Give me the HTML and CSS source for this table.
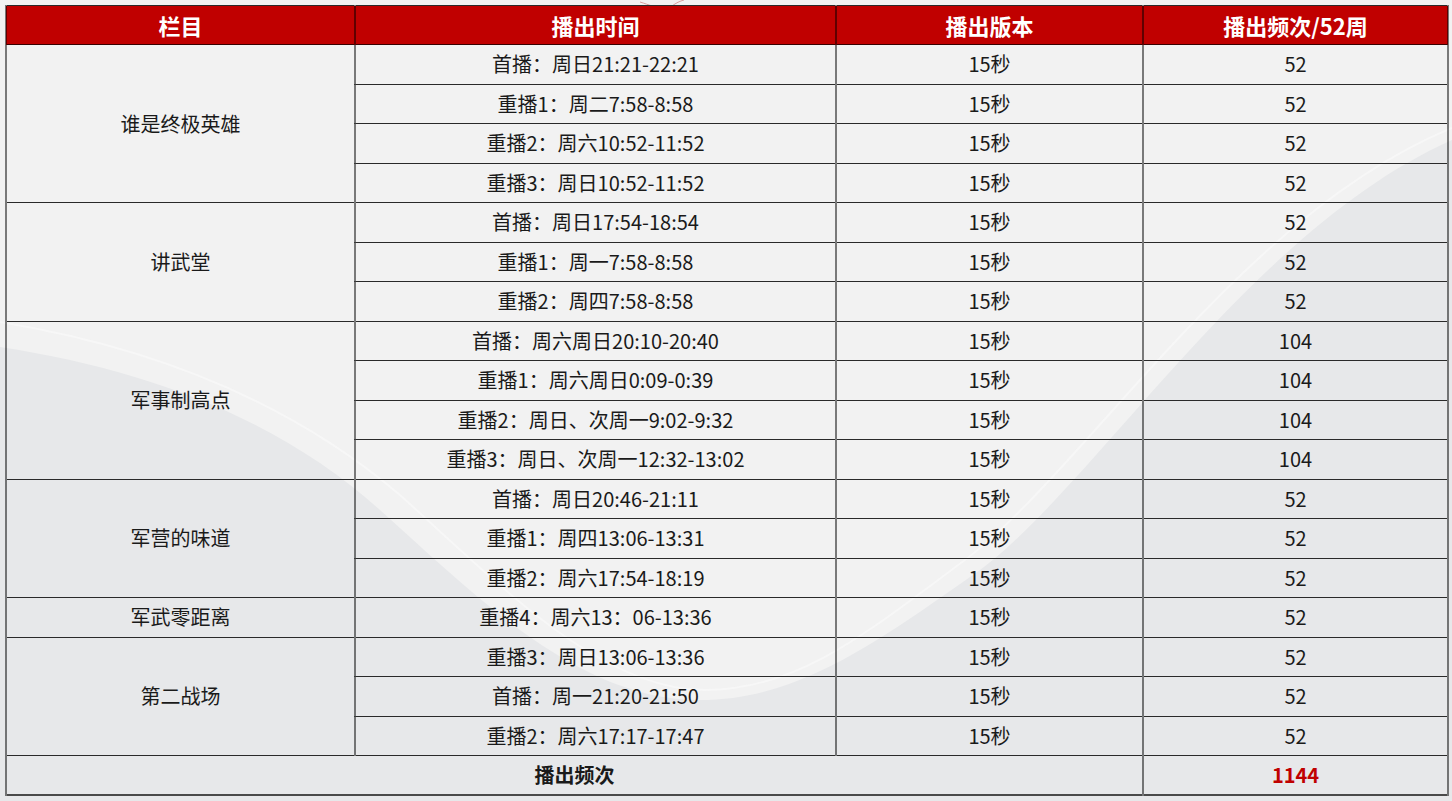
FILE: index.html
```html
<!DOCTYPE html>
<html lang="zh-CN">
<head>
<meta charset="utf-8">
<title>播出时间表</title>
<link rel="stylesheet" href="styles.css">
</head>
<body>
<svg class="bg" width="1452" height="801" viewBox="0 0 1452 801" aria-hidden="true">
  <path d="M0,347 C150,370 280,420 380,510 C480,600 580,700 700,700 C800,700 880,640 980,570 C1100,480 1250,230 1452,140 L1452,801 L0,801 Z" fill="#e7e8ea"/>
  <path d="M0,322 C170,350 300,410 400,495 C500,585 600,690 705,690 C800,690 870,630 965,560 C1085,470 1240,215 1452,128" fill="none" stroke="#fafafa" stroke-width="2" opacity="0.6"/>
  <path d="M640,2 C650,5 655,8 660,6 M672,6 C676,3 680,1 684,0" fill="none" stroke="#d9a0a0" stroke-width="1"/>
</svg>
<table class="sched">
  <colgroup>
    <col class="c1"><col class="c2"><col class="c3"><col class="c4">
  </colgroup>
  <thead>
    <tr><th>栏目</th><th>播出时间</th><th>播出版本</th><th>播出频次/52周</th></tr>
  </thead>
  <tbody>
    <tr><td rowspan="4">谁是终极英雄</td><td>首播：周日21:21-22:21</td><td>15秒</td><td>52</td></tr>
    <tr><td>重播1：周二7:58-8:58</td><td>15秒</td><td>52</td></tr>
    <tr><td>重播2：周六10:52-11:52</td><td>15秒</td><td>52</td></tr>
    <tr><td>重播3：周日10:52-11:52</td><td>15秒</td><td>52</td></tr>
    <tr><td rowspan="3">讲武堂</td><td>首播：周日17:54-18:54</td><td>15秒</td><td>52</td></tr>
    <tr><td>重播1：周一7:58-8:58</td><td>15秒</td><td>52</td></tr>
    <tr><td>重播2：周四7:58-8:58</td><td>15秒</td><td>52</td></tr>
    <tr><td rowspan="4">军事制高点</td><td>首播：周六周日20:10-20:40</td><td>15秒</td><td>104</td></tr>
    <tr><td>重播1：周六周日0:09-0:39</td><td>15秒</td><td>104</td></tr>
    <tr><td>重播2：周日、次周一9:02-9:32</td><td>15秒</td><td>104</td></tr>
    <tr><td>重播3：周日、次周一12:32-13:02</td><td>15秒</td><td>104</td></tr>
    <tr><td rowspan="3">军营的味道</td><td>首播：周日20:46-21:11</td><td>15秒</td><td>52</td></tr>
    <tr><td>重播1：周四13:06-13:31</td><td>15秒</td><td>52</td></tr>
    <tr><td>重播2：周六17:54-18:19</td><td>15秒</td><td>52</td></tr>
    <tr><td>军武零距离</td><td>重播4：周六13：06-13:36</td><td>15秒</td><td>52</td></tr>
    <tr><td rowspan="3">第二战场</td><td>重播3：周日13:06-13:36</td><td>15秒</td><td>52</td></tr>
    <tr><td>首播：周一21:20-21:50</td><td>15秒</td><td>52</td></tr>
    <tr><td>重播2：周六17:17-17:47</td><td>15秒</td><td>52</td></tr>
  </tbody>
  <tfoot>
    <tr><td colspan="3" class="total-label">播出频次</td><td class="total-val">1144</td></tr>
  </tfoot>
</table>
</body>
</html>
```
FILE: styles.css
```css
html, body {
  margin: 0;
  padding: 0;
}
body {
  width: 1452px;
  height: 801px;
  overflow: hidden;
  background: #f2f2f2;
  position: relative;
  font-family: "Noto Sans CJK SC", "Noto Sans", sans-serif;
  color: #1a1a1a;
}
.bg {
  position: absolute;
  left: 0;
  top: 0;
  z-index: 0;
}
.sched {
  position: relative;
  z-index: 1;
  margin: 5px 0 0 5px;
  width: 1442px;
  border-collapse: collapse;
  table-layout: fixed;
  border-left: 2px solid #7f7f7f;
  border-right: 2px solid #5a5a5a;
  border-top: 1px solid #555;
  border-bottom: 2px solid #4a4a4a;
}
.c1 { width: 349px; }
.c2 { width: 481px; }
.c3 { width: 307px; }
.c4 { width: 305px; }
.sched th,
.sched td {
  padding: 0;
  text-align: center;
  vertical-align: middle;
  border-left: 2px solid rgba(0,0,0,0.5);
  border-right: 2px solid rgba(0,0,0,0.5);
  border-top: 1px solid #2a2a2a;
  border-bottom: 1px solid #2a2a2a;
  line-height: 1;
  white-space: nowrap;
}
.sched th {
  background: #c00000;
  color: #fff;
  font-weight: 700;
  font-size: 22px;
  height: 38px;
  border-bottom: 1px solid #3a0000;
}
.sched tbody td {
  height: 38.5px;
  font-size: 20px;
}
.sched tfoot td {
  height: 38px;
  font-size: 20px;
  font-weight: 700;
}
.total-val {
  color: #c00000;
}
```
